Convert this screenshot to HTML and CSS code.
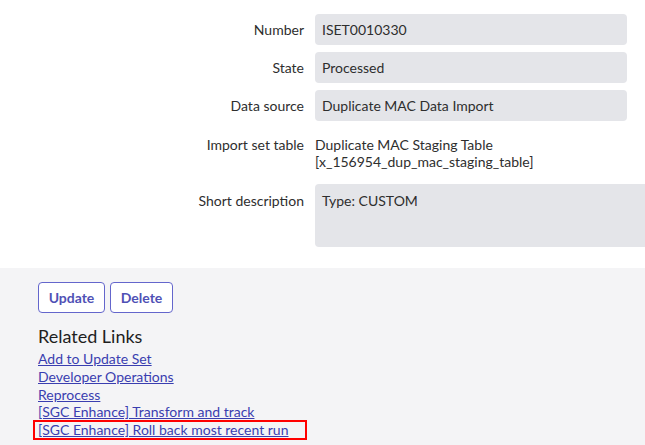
FILE: index.html
```html
<!DOCTYPE html>
<html>
<head>
<meta charset="utf-8">
<link rel="stylesheet" href="styles.css">
</head>
<body>
<div class="form">
  <div class="row">
    <div class="label">Number</div>
    <div class="field">ISET0010330</div>
  </div>
  <div class="row">
    <div class="label">State</div>
    <div class="field">Processed</div>
  </div>
  <div class="row">
    <div class="label">Data source</div>
    <div class="field">Duplicate MAC Data Import</div>
  </div>
  <div class="row row-text row-import">
    <div class="label">Import set table</div>
    <div class="value">Duplicate MAC Staging Table<br>[x_156954_dup_mac_staging_table]</div>
  </div>
  <div class="row row-text row-desc">
    <div class="label">Short description</div>
    <div class="field field-area">Type: CUSTOM</div>
  </div>
</div>
<div class="footer">
  <div class="buttons">
    <button class="btn btn-update">Update</button>
    <button class="btn btn-delete">Delete</button>
  </div>
  <h2 class="related">Related Links</h2>
  <div class="links">
    <a href="#">Add to Update Set</a>
    <a href="#">Developer Operations</a>
    <a href="#">Reprocess</a>
    <a href="#">[SGC Enhance] Transform and track</a>
    <a href="#">[SGC Enhance] Roll back most recent run</a>
  </div>
  <div class="highlight"></div>
</div>
</body>
</html>
```
FILE: styles.css
```css
html, body {
  margin: 0;
  padding: 0;
  background: #ffffff;
}
body {
  font-family: Lato, "Open Sans", sans-serif;
  font-size: 14px;
  color: #2e2e2e;
  width: 645px;
  height: 445px;
  overflow: hidden;
}
.form {
  padding-top: 14px;
  height: 254px;
  box-sizing: border-box;
}
.row {
  display: grid;
  grid-template-columns: 304px 312px;
  column-gap: 11px;
  align-items: center;
  margin-bottom: 7px;
}
.label {
  text-align: right;
  color: #2e2e2e;
}
.field {
  background: #e4e5e9;
  border-radius: 4px;
  height: 31px;
  line-height: 31px;
  padding: 0 7px;
  box-sizing: border-box;
  white-space: nowrap;
}
.row-text {
  align-items: start;
  line-height: 17px;
}
.row-import {
  margin-top: 15px;
}
.row-text .label {
  line-height: 17px;
}
.value {
  line-height: 17px;
}
.row-desc {
  grid-template-columns: 304px 330px;
  margin-top: 14px;
}
.row-desc .label {
  padding-top: 8px;
}
.field-area {
  height: 63px;
  line-height: 17px;
  padding: 8px 7px;
  border-radius: 4px 0 0 4px;
}
.footer {
  position: relative;
  background: #f4f4f6;
  height: 177px;
  margin-top: 14px;
  padding: 14px 38px 0;
  box-sizing: border-box;
}
.buttons {
  display: flex;
  gap: 5px;
}
.btn {
  font-family: Lato, "Open Sans", sans-serif;
  font-weight: bold;
  font-size: 14px;
  color: #4f51b5;
  background: #ffffff;
  border: 1px solid #6466cc;
  border-radius: 4px;
  height: 31px;
  padding: 0;
  cursor: pointer;
}
.btn-update { width: 67px; }
.btn-delete { width: 63px; }
.related {
  font-size: 18px;
  font-weight: normal;
  color: #1e1e1e;
  margin: 11px 0 2px;
  line-height: 24px;
}
.links {
  display: flex;
  flex-direction: column;
  align-items: flex-start;
}
.links a {
  color: #3a3eb0;
  text-decoration: underline;
  line-height: 17.75px;
}
.highlight {
  position: absolute;
  left: 33px;
  top: 152px;
  width: 274px;
  height: 20px;
  border: 2px solid #ff0000;
  box-sizing: border-box;
}
```
